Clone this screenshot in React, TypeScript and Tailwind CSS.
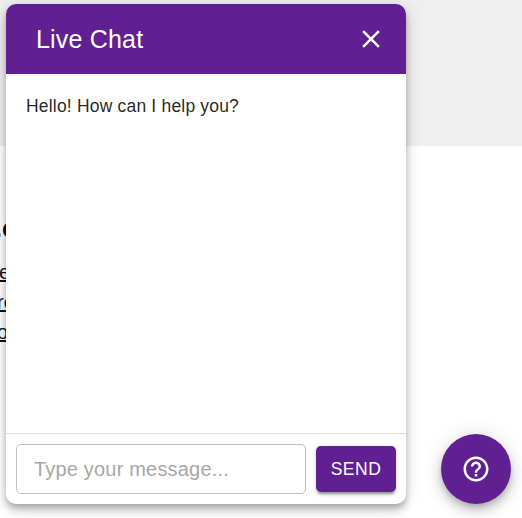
import React from "react";

const CloseIcon = () => (
  <svg viewBox="0 0 24 24" className="size-[30px] fill-current" aria-hidden="true">
    <path d="M19 6.41 17.59 5 12 10.59 6.41 5 5 6.41 10.59 12 5 17.59 6.41 19 12 13.41 17.59 19 19 17.59 13.41 12z" />
  </svg>
);

const HelpIcon = () => (
  <svg viewBox="0 0 24 24" className="size-[30px] fill-current" aria-hidden="true">
    <path d="M11 18h2v-2h-2zm1-16C6.48 2 2 6.48 2 12s4.48 10 10 10 10-4.48 10-10S17.52 2 12 2m0 18c-4.41 0-8-3.59-8-8s3.59-8 8-8 8 3.59 8 8-3.59 8-8 8m0-14c-2.21 0-4 1.79-4 4h2c0-1.1.9-2 2-2s2 .9 2 2c0 2-3 1.75-3 5h2c0-2.25 3-2.5 3-5 0-2.21-1.79-4-4-4" />
  </svg>
);

function PageBackdrop() {
  return (
    <div className="flex h-full flex-col" aria-hidden="true">
      <div className="h-[146px] shrink-0 bg-[#efefef]" />
      <div className="flex flex-col pt-[67px] text-xl leading-[30px] text-[#111]">
        <div className="-ml-[5px] h-[44px] text-[25px] font-bold leading-[30px]">.c</div>
        <div className="-ml-px h-[30px] underline decoration-2 underline-offset-1">e</div>
        <div className="-ml-[3px] h-[30px] underline decoration-2 underline-offset-1">ro</div>
        <div className="-ml-[3px] h-[30px] underline decoration-2 underline-offset-1">o</div>
      </div>
    </div>
  );
}

function ChatPanel() {
  return (
    <section className="absolute left-[6px] top-1 flex h-[500px] w-[400px] flex-col overflow-hidden rounded-[10px] bg-white shadow-[0_3.75px_6.25px_-1.25px_rgba(0,0,0,0.2),0_6.25px_10px_0_rgba(0,0,0,0.14),0_1.25px_17.5px_0_rgba(0,0,0,0.12)]">
      <header className="flex h-[70px] shrink-0 items-center justify-between bg-[#612091] pl-[30px] pr-5 text-white">
        <h1 className="text-[25px] leading-10 tracking-[0.0075em]">Live Chat</h1>
        <button aria-label="Close">
          <CloseIcon />
        </button>
      </header>
      <main className="flex-1 p-5">
        <p className="text-[17.5px] leading-[25px] tracking-[0.01071em] text-black/87">Hello! How can I help you?</p>
      </main>
      <footer className="flex h-[71px] shrink-0 items-center gap-2.5 border-t border-[#dedede] px-2.5">
        <input
          className="h-[50px] w-[290px] rounded-[5px] border border-[#bfbfbf] px-[17px] text-xl tracking-[0.00938em] outline-none placeholder:text-[#a7a7a7]"
          placeholder="Type your message..."
        />
        <button className="h-[46px] w-20 rounded-[5px] bg-[#612091] text-[17.5px] font-medium tracking-[0.02857em] text-white shadow-[0_3.75px_1.25px_-2.5px_rgba(0,0,0,0.2),0_2.5px_2.5px_0_rgba(0,0,0,0.14),0_1.25px_6.25px_0_rgba(0,0,0,0.12)]">
          SEND
        </button>
      </footer>
    </section>
  );
}

export default function App() {
  return (
    <div className="relative h-[518px] w-[522px] overflow-hidden bg-white font-['Liberation_Sans',Arial,sans-serif]">
      <PageBackdrop />
      <ChatPanel />
      <button
        aria-label="Help"
        className="absolute left-[441px] top-[434px] flex size-[70px] items-center justify-center rounded-full bg-[#612091] text-white shadow-[0_3.75px_6.25px_-1.25px_rgba(0,0,0,0.2),0_7.5px_12.5px_0_rgba(0,0,0,0.14),0_1.25px_22.5px_0_rgba(0,0,0,0.12)]"
      >
        <HelpIcon />
      </button>
    </div>
  );
}
